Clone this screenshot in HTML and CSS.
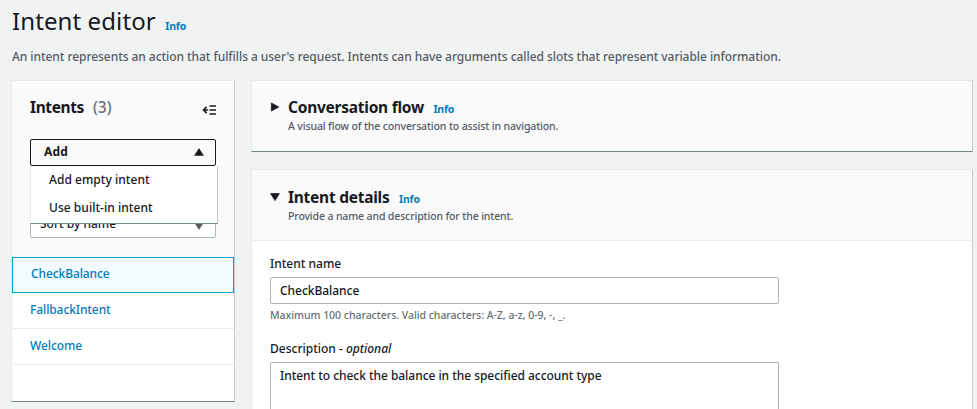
FILE: index.html
```html
<!DOCTYPE html>
<html lang="en">
<head>
<meta charset="utf-8">
<title>Intent editor</title>
<link rel="stylesheet" href="styles.css">
</head>
<body>
<header class="page-header">
  <h1><span class="page-title">Intent editor</span> <a class="info">Info</a></h1>
  <p class="page-desc">An intent represents an action that fulfills a user's request. Intents can have arguments called slots that represent variable information.</p>
</header>
<main class="layout">
  <aside class="card sidebar">
    <div class="sidebar-head">
      <div class="sidebar-title">
        <h2><span class="side-name">Intents</span> <span class="count">(3)</span></h2>
        <svg class="collapse" width="14" height="10" viewBox="0 0 14 10" fill="none" stroke="#16191f" stroke-width="1.7"><path d="M4.6 1.8 1.5 5l3.1 3.2M1.5 5H6.2M7.5 1H14M7.5 5H14M7.5 9H14"/></svg>
      </div>
      <div class="dropdown">
        <button class="add"><span class="add-label">Add</span><svg width="10" height="8" viewBox="0 0 10 8"><path d="M5 .6 9.4 7.4H.6z" fill="#16191f" stroke="#16191f" stroke-width=".6" stroke-linejoin="round"/></svg></button>
        <div class="menu">
          <div class="menu-item"><span class="menu-empty">Add empty intent</span></div>
          <div class="menu-item"><span class="menu-built">Use built-in intent</span></div>
        </div>
      </div>
      <div class="sort"><span class="sort-label">Sort by name</span><svg class="sort-arrow" width="10" height="8" viewBox="0 0 10 8"><path d="M.6 .6h8.8L5 7.4z" fill="#545b64" stroke="#545b64" stroke-width=".6" stroke-linejoin="round"/></svg></div>
    </div>
    <nav>
      <a class="row selected"><span class="row-check">CheckBalance</span></a>
      <a class="row"><span class="row-fallback">FallbackIntent</span></a>
      <a class="row"><span class="row-welcome">Welcome</span></a>
    </nav>
  </aside>
  <div class="content">
    <section class="card flow">
      <svg class="caret" width="10" height="10" viewBox="0 0 10 10"><path d="M1.4 1v8L8.8 5z" fill="#16191f" stroke="#16191f" stroke-width=".8" stroke-linejoin="round"/></svg>
      <div>
        <h2><span class="flow-title">Conversation flow</span> <a class="info">Info</a></h2>
        <p><span class="flow-desc">A visual flow of the conversation to assist in navigation.</span></p>
      </div>
    </section>
    <section class="card details">
      <div class="details-head">
        <svg class="caret" width="10" height="10" viewBox="0 0 10 10"><path d="M.6 1.6h8.8L5 8.6z" fill="#16191f" stroke="#16191f" stroke-width=".8" stroke-linejoin="round"/></svg>
        <div>
          <h2><span class="details-title">Intent details</span> <a class="info">Info</a></h2>
          <p><span class="details-desc">Provide a name and description for the intent.</span></p>
        </div>
      </div>
      <div class="form">
        <div class="label"><span class="label-name">Intent name</span></div>
        <div class="input"><span class="input-name">CheckBalance</span></div>
        <div class="hint"><span class="hint-text">Maximum 100 characters. Valid characters: A-Z, a-z, 0-9, -, _.</span></div>
        <div class="label"><span class="label-desc">Description - <i>optional</i></span></div>
        <div class="input textarea"><span class="input-desc">Intent to check the balance in the specified account type</span></div>
      </div>
    </section>
  </div>
</main>
</body>
</html>
```
FILE: styles.css
```css
* { box-sizing: border-box; }
body {
  margin: 0;
  padding: 0 4px 0 11px;
  background: #f1f3f3;
  color: #16191f;
  font: 500 12px/18px "Noto Sans", "Open Sans", sans-serif;
  white-space: nowrap;
}
h1, h2, p { margin: 0; }
h1, h2 { display: flex; align-items: baseline; }
.info { color: #007dbc; font-size: 10.5px; font-weight: 700; line-height: 16px; margin-left: 9.5px; letter-spacing: -0.2px; }
.page-header { height: 80px; padding: 6px 0 0 1px; }
h1 { font-size: 24px; font-weight: 400; line-height: 30px; letter-spacing: 0.1px; }
.page-desc { margin-top: 12px; color: #545b64; letter-spacing: -0.055px; }
.layout { display: flex; align-items: flex-start; gap: 16px; }
.card {
  background: #fafafa;
  border: 1px solid #e6e9e9;
  border-right-color: #c6cccd;
  border-bottom-color: #75898b;
}
.sidebar { width: 224px; height: 322px; background: #fff; }
.sidebar-head { height: 176px; padding: 15px 18px 0; background: #fafafa; }
.sidebar-title { display: flex; justify-content: space-between; align-items: center; height: 22px; }
h2 { font-size: 15.5px; font-weight: 700; line-height: 22px; letter-spacing: -0.25px; }
.side-name { letter-spacing: -0.4px; }
.count { margin-left: 9px; color: #687078; font-weight: 500; letter-spacing: 0.1px; }
.collapse { margin-top: 5px; }
.dropdown { position: relative; margin-top: 21px; }
.add {
  display: flex; align-items: center; justify-content: space-between;
  width: 186px; height: 27px; padding: 0 11px 1px 13px;
  border: 1px solid #16191f; border-radius: 2px; background: #fafafa;
  color: #16191f; font: 700 12px/18px "Noto Sans", sans-serif; letter-spacing: 0.2px;
}
.menu {
  position: absolute; top: 27px; left: 0; width: 188px; height: 58px;
  background: #fff; border: 1px solid #e6e9e9; border-top: 0;
  border-right-color: #c6cccd; border-bottom-color: #75898b;
}
.menu-item { height: 28px; padding: 5px 0 0 18px; letter-spacing: 0.04px; }
.sort {
  display: flex; align-items: center; justify-content: space-between;
  width: 186px; height: 27px; margin-top: 45px; padding: 0 11px 1px 9px;
  border: 1px solid #aab7b8; border-radius: 2px; background: #fff;
}
.sort-arrow { margin-top: 3px; }
.row { display: flex; align-items: center; height: 36px; padding: 0 18px 2px; border-bottom: 1px solid #eaeded; color: #007dbc; letter-spacing: -0.1px; }
.row.selected { border: 1px solid #00a1c9; background: #f1faff; }
.content { flex: 1; display: flex; flex-direction: column; gap: 17px; }
.flow, .details-head { display: flex; padding: 15px 18px 0; height: 72px; }
.details { height: 240px; border-bottom: 0; background: #fff; }
.details-head { height: 71px; padding-top: 16px; background: #fafafa; border-bottom: 1px solid #eaeded; }
.caret { flex: none; margin: 6px 8px 0 0; }
.card p { font-size: 10.5px; line-height: 16px; color: #545b64; letter-spacing: -0.13px; }
.form { padding: 14px 18px 0; }
.label { height: 22px; }
.input { width: 509px; height: 27px; padding: 4px 9px 0; border: 1px solid #aab7b8; border-radius: 2px; background: #fff; letter-spacing: -0.04px; }
.hint { height: 36px; padding-top: 3px; font-size: 10.5px; line-height: 16px; color: #687078; letter-spacing: -0.03px; }
.input.textarea { height: 47px; border-bottom: 0; border-radius: 2px 2px 0 0; }
```
